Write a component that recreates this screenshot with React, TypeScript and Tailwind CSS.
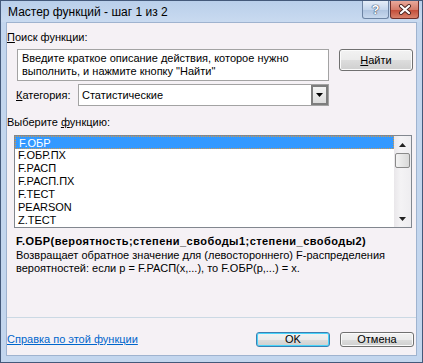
import React from "react";

const items = ["F.ОБР", "F.ОБР.ПХ", "F.РАСП", "F.РАСП.ПХ", "F.ТЕСТ", "PEARSON", "Z.ТЕСТ"];

function WinButton({ children, focused }: { children: React.ReactNode; focused?: boolean }) {
  return (
    <button
      className={
        "flex w-[74px] items-center justify-center rounded-[3px] border text-[11px] text-black " +
        (focused
          ? "border-[#3c7fb1] shadow-[inset_0_0_0_1px_#48d4fb]"
          : "border-[#707070] shadow-[inset_0_0_0_1px_#fbfbfb]") +
        " bg-[linear-gradient(#f2f2f2_0%,#ebebeb_50%,#dddddd_51%,#cfcfcf_100%)]"
      }
    >
      {children}
    </button>
  );
}

export default function App() {
  return (
    <div
      className="flex h-[363px] w-[423px] flex-col border border-[#44597a] bg-[#c3d6ee] text-[11px] leading-[13px] text-black"
      style={{ fontFamily: '"Liberation Sans", Arial, sans-serif' }}
    >
      {/* title bar */}
      <div className="flex h-[21px] shrink-0 items-start bg-[linear-gradient(#b9cfea,#c9daf0)] pl-[7px]">
        <span className="mt-[4px] text-[12px] leading-[14px] text-black">Мастер функций - шаг 1 из 2</span>
        <div className="ml-auto mr-[3px] flex gap-[1px]">
          <div className="flex h-[18px] w-[27px] items-center justify-center rounded-b-[3px] border border-t-0 border-[#6d84a3] bg-[linear-gradient(#e4edf8,#c5d6ec_50%,#aec3df_51%,#c8d9ee)]">
            <span
              className="text-[13px] font-bold leading-none text-white"
              style={{ textShadow: "0 0 1px #3a4a66, 0 0 1px #3a4a66, 0 0 1px #3a4a66" }}
            >
              ?
            </span>
          </div>
          <div className="flex h-[18px] w-[29px] items-center justify-center rounded-b-[3px] border border-t-0 border-[#6e2f2a] bg-[linear-gradient(#e9a99b,#d47c6a_50%,#c24a36_51%,#d8816b)]">
            <svg width="14" height="11" viewBox="0 0 14 11">
              <path d="M3 2 L11 9 M11 2 L3 9" stroke="#4a2420" strokeWidth="4" strokeLinecap="round" />
              <path d="M3 2 L11 9 M11 2 L3 9" stroke="#ffffff" strokeWidth="2.2" strokeLinecap="round" />
            </svg>
          </div>
        </div>
      </div>

      {/* client area */}
      <div className="mx-[5px] flex h-[334px] flex-col border border-[#9fb3cf] bg-[#f5f1f5]">
        <div className="mt-[8px] h-[13px]">
          <span className="underline">П</span>оиск функции:
        </div>

        <div className="mt-[5px] flex items-start">
          <div className="ml-[10px] h-[32px] w-[312px] border border-[#a3a3a3] bg-white px-[4px] pt-[2px]">
            Введите краткое описание действия, которое нужно выполнить, и нажмите кнопку "Найти"
          </div>
          <div className="ml-[10px] flex h-[22px]">
            <WinButton>
              <span>
                <span className="underline">Н</span>айти
              </span>
            </WinButton>
          </div>
        </div>

        <div className="mt-[3px] flex h-[22px] items-center">
          <span className="ml-[9px] w-[62px]">
            <span className="underline">К</span>атегория:
          </span>
          <div className="flex h-[22px] w-[251px] items-center border border-[#a3a3a3] bg-white pl-[3px]">
            <span>Статистические</span>
            <div className="ml-auto flex h-[20px] w-[17px] items-center justify-center border-2 border-[#7d7d7d] bg-[linear-gradient(#f4f4f4,#dcdcdc)]">
              <svg width="7" height="4" viewBox="0 0 7 4">
                <path d="M0 0 H7 L3.5 4 Z" fill="#000" />
              </svg>
            </div>
          </div>
        </div>

        <div className="mt-[10px] h-[13px]">
          Выберите <span className="underline">ф</span>ункцию:
        </div>

        <div className="ml-[7px] mt-[6px] flex h-[93px] w-[398px] border border-[#82878f] bg-white">
          <div className="flex flex-1 flex-col">
            {items.map((it, i) => (
              <div
                key={it}
                className={
                  "h-[13px] pl-[3px] leading-[13px] " +
                  (i === 0 ? "border border-dotted border-[#d49a4a] bg-[#3399ff] pl-[2px] leading-[11px] text-white" : "")
                }
              >
                {it}
              </div>
            ))}
          </div>
          <div className="flex w-[17px] flex-col items-center bg-[linear-gradient(90deg,#e9e7ea,#f4f3f5_40%,#eeedf0)]">
            <svg className="mt-[7px]" width="7" height="4" viewBox="0 0 7 4">
              <path d="M0 4 H7 L3.5 0 Z" fill="#222" />
            </svg>
            <div className="mt-[6px] h-[15px] w-[15px] rounded-[2px] border border-[#8a8a8a] bg-[linear-gradient(90deg,#f3f3f3,#e6e6e6_50%,#d9d9d9)]" />
            <svg className="mb-[6px] mt-auto" width="7" height="4" viewBox="0 0 7 4">
              <path d="M0 0 H7 L3.5 4 Z" fill="#222" />
            </svg>
          </div>
        </div>

        <div className="ml-[9px] mt-[7px] font-bold tracking-[0.45px]">
          F.ОБР(вероятность;степени_свободы1;степени_свободы2)
        </div>
        <div className="ml-[9px] mt-[1px]">
          Возвращает обратное значение для (левостороннего) F-распределения
          <br />
          вероятностей: если p = F.РАСП(x,...), то F.ОБР(p,...) = x.
        </div>

        <div className="mt-auto border-t border-[#cbd9e4]" />
        <div className="mb-[7px] mt-[12px] flex h-[18px] items-center">
          <a href="#" className="text-[#0066cc] underline">
            Справка по этой функции
          </a>
          <div className="ml-auto mr-[2px] flex gap-[10px]">
            <WinButton focused>OK</WinButton>
            <WinButton>Отмена</WinButton>
          </div>
        </div>
      </div>
    </div>
  );
}
